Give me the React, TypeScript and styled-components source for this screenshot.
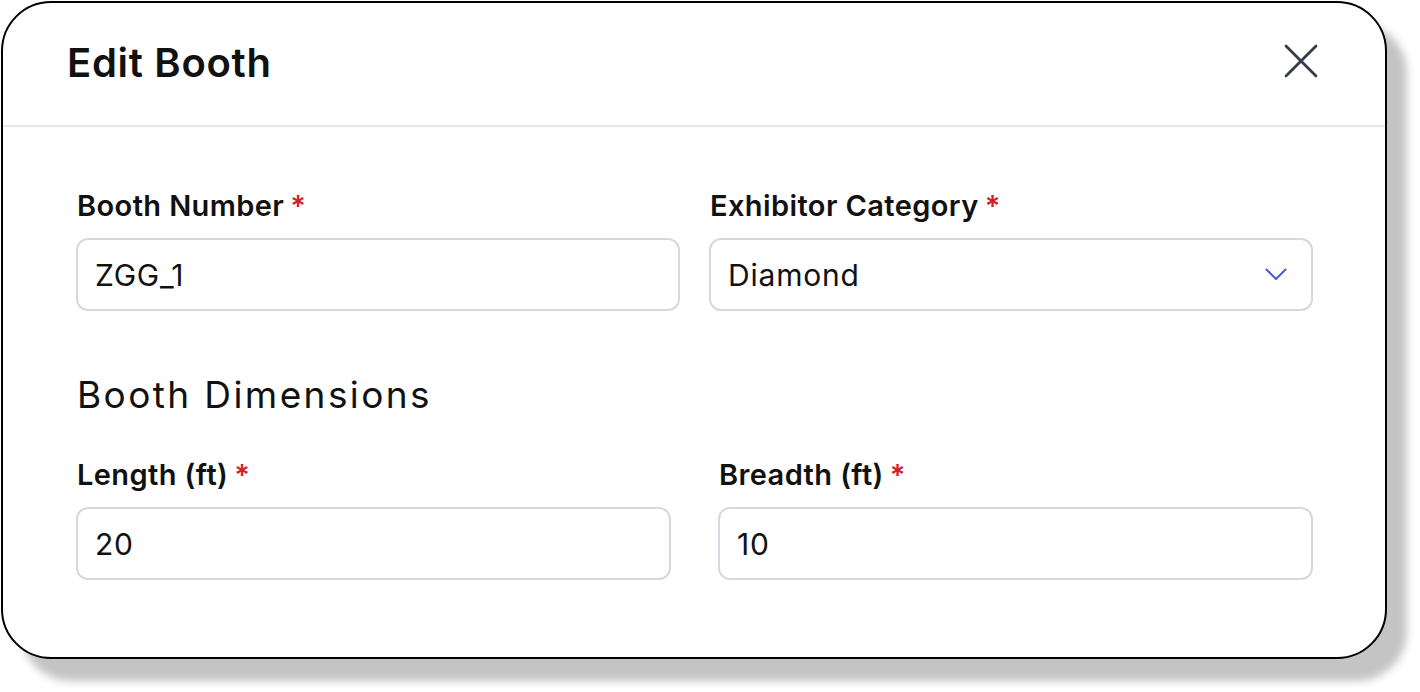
import React from "react";
import styled, { createGlobalStyle } from "styled-components";

const Global = createGlobalStyle`
  html, body { margin: 0; padding: 0; background: #ffffff; }
  body { font-family: "Inter", "Noto Sans", sans-serif; color: #111111; }
  * { box-sizing: border-box; }
`;

const Page = styled.div`
  width: 1420px;
  height: 692px;
  padding: 1px 0 0 1px;
  background: #ffffff;
  overflow: hidden;
`;

const Card = styled.div`
  width: 1386px;
  height: 658px;
  border: 2px solid #000000;
  border-radius: 50px;
  background: #ffffff;
  box-shadow: 20px 22px 8px #c4c4c4;
  overflow: hidden;
  display: flex;
  flex-direction: column;
`;

const Header = styled.div`
  height: 124px;
  flex-shrink: 0;
  display: flex;
  align-items: center;
  justify-content: space-between;
  padding: 0 66px 2px 64px;
  border-bottom: 2px solid #e6e8ec;
`;

const Title = styled.h1`
  margin: 0;
  font-size: 40px;
  font-weight: 600;
  line-height: 48px;
  color: #111111;
  letter-spacing: 0.7px;
`;

const CloseButton = styled.button`
  border: 0;
  background: transparent;
  padding: 0;
  width: 36px;
  height: 36px;
  margin-bottom: 4px;
  display: flex;
  align-items: center;
  justify-content: center;
  cursor: pointer;
`;

const Body = styled.div`
  padding: 63px 72px 0 73px;
  display: flex;
  flex-direction: column;
`;

const Row = styled.div<{ $gap: number }>`
  display: grid;
  grid-template-columns: 1fr 1fr;
  column-gap: ${(p) => p.$gap}px;
`;

const Field = styled.div`
  display: flex;
  flex-direction: column;
`;

const Label = styled.label`
  font-size: 29px;
  font-weight: 600;
  line-height: 32px;
  color: #111111;
  letter-spacing: 0.4px;
  margin-left: 1px;
  margin-bottom: 16px;
`;

const Required = styled.span`
  color: #d4202a;
  margin-left: 6px;
`;

const InputBox = styled.div`
  height: 73px;
  border: 2px solid #d5d8df;
  border-radius: 12px;
  display: flex;
  align-items: center;
  justify-content: space-between;
  padding: 0 24px 0 17px;
  font-size: 30px;
  font-weight: 400;
  letter-spacing: 0.8px;
  color: #111111;
`;

const Section = styled.h2`
  margin: 62px 0 42px 1px;
  font-size: 37px;
  font-weight: 400;
  line-height: 44px;
  letter-spacing: 2.4px;
  color: #111111;
`;

const Cross = () => (
  <svg width="34" height="34" viewBox="0 0 34 34" fill="none">
    <path d="M2 2 L32 32 M32 2 L2 32" stroke="#343c48" strokeWidth="2.8" strokeLinecap="round" />
  </svg>
);

const Chevron = () => (
  <svg width="22" height="13" viewBox="0 0 22 13" fill="none">
    <path d="M1.5 1.5 L11 11 L20.5 1.5" stroke="#4a57e0" strokeWidth="2" strokeLinecap="round" strokeLinejoin="round" />
  </svg>
);

export default function App() {
  return (
    <>
      <Global />
      <Page>
        <Card>
          <Header>
            <Title>Edit Booth</Title>
            <CloseButton aria-label="Close">
              <Cross />
            </CloseButton>
          </Header>
          <Body>
            <Row $gap={29}>
              <Field>
                <Label>
                  Booth Number<Required>*</Required>
                </Label>
                <InputBox>ZGG_1</InputBox>
              </Field>
              <Field>
                <Label>
                  Exhibitor Category<Required>*</Required>
                </Label>
                <InputBox>
                  <span>Diamond</span>
                  <Chevron />
                </InputBox>
              </Field>
            </Row>
            <Section>Booth Dimensions</Section>
            <Row $gap={47}>
              <Field>
                <Label>
                  Length (ft)<Required>*</Required>
                </Label>
                <InputBox>20</InputBox>
              </Field>
              <Field>
                <Label>
                  Breadth (ft)<Required>*</Required>
                </Label>
                <InputBox>10</InputBox>
              </Field>
            </Row>
          </Body>
        </Card>
      </Page>
    </>
  );
}
